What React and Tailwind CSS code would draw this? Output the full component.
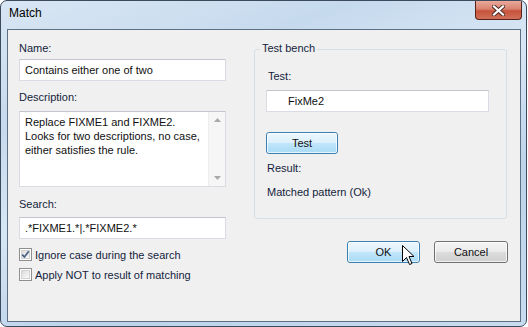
import React from 'react';

const Label = ({ children, className = '' }) => (
  <div className={`h-[14px] leading-[14px] text-[#141d3d] ${className}`}>{children}</div>
);

const TextBox = ({ children, className = '' }) => (
  <div
    className={`h-[22px] flex items-center bg-white border border-[#d9dde3] border-t-[#c2c6cc] text-[#101010] ${className}`}
  >
    {children}
  </div>
);

const Checkbox = ({ checked, label }) => (
  <div className="flex items-center gap-[3px] h-[13px]">
    <div className="w-[13px] h-[13px] border border-[#8f8f8f] bg-white p-[1px]">
      <div className="relative w-full h-full bg-gradient-to-br from-[#dcdcdc] to-[#fbfbfb] border border-[#d2d2d2]">
        {checked && (
          <svg viewBox="0 0 9 9" className="absolute -left-[1px] -top-[1px] w-[9px] h-[9px]">
            <path d="M1.2 4.6 L3.4 7 L7.8 1.3" fill="none" stroke="#4b6183" strokeWidth="1.7" />
          </svg>
        )}
      </div>
    </div>
    <span className="leading-[14px] text-[#141d3d]">{label}</span>
  </div>
);

const AeroButton = ({ children, hot, className = '' }) => (
  <div
    className={`h-[22px] rounded-[3px] border flex items-center justify-center text-[#101010] ${
      hot
        ? 'border-[#3c7fb1] bg-[linear-gradient(180deg,#edf7fd_0%,#dcf0fc_48%,#c1e6fb_50%,#aadbf6_100%)]'
        : 'border-[#707070] bg-[linear-gradient(180deg,#f4f4f4_0%,#ebebeb_48%,#dddddd_50%,#cfcfcf_100%)]'
    } ${className}`}
  >
    <div className="w-full h-full rounded-[2px] border border-white/70 flex items-center justify-center">
      {children}
    </div>
  </div>
);

export default function App() {
  return (
    <div className="w-[528px] h-[327px] bg-white font-['Liberation_Sans',Arial,sans-serif] text-[11px]">
      <div className="w-[527px] h-[327px] rounded-[7px] border border-[#3b4b5c] overflow-hidden flex flex-col pl-[6px] pr-[5px] pb-[4px] bg-[linear-gradient(160deg,#d9e6f3_0%,#c6daee_25%,#d7e6f4_45%,#bcd3ea_70%,#c9dcef_100%)]">
        {/* Title bar */}
        <div className="h-[28px] flex items-start justify-between shrink-0">
          <span className="mt-[5px] ml-[2px] text-[12px] leading-[15px] text-black">Match</span>
          <div className="relative w-[47px] h-[19px] -mr-[1px] rounded-b-[4px] border border-t-0 border-[#5a2318] bg-[linear-gradient(180deg,#e9a99b_0%,#d88270_45%,#c7533b_55%,#d0705a_100%)] flex items-center justify-center">
            <svg viewBox="0 0 12 11" className="w-[13px] h-[11px]">
              <path
                d="M1.5 1.5 L10.5 9.5 M10.5 1.5 L1.5 9.5"
                stroke="#4a2a24"
                strokeWidth="4"
                strokeLinecap="square"
              />
              <path
                d="M1.5 1.5 L10.5 9.5 M10.5 1.5 L1.5 9.5"
                stroke="#ffffff"
                strokeWidth="2.2"
                strokeLinecap="square"
              />
            </svg>
          </div>
        </div>

        {/* Client area */}
        <div className="flex-1 border border-[#5d6f83] bg-[#f0f0f0] flex pl-[11px] pt-[11px]">
          {/* Left column */}
          <div className="w-[207px] flex flex-col">
            <Label>Name:</Label>
            <TextBox className="mt-[4px] pl-[5px]">Contains either one of two</TextBox>

            <Label className="mt-[9px]">Description:</Label>
            <div className="mt-[7px] h-[76px] bg-white border border-[#d9dde3] border-t-[#c2c6cc] flex">
              <div className="flex-1 pl-[5px] pt-[3px] leading-[14px] text-[#101010]">
                Replace FIXME1 and FIXME2.
                <br />
                Looks for two descriptions, no case,
                <br />
                either satisfies the rule.
              </div>
              <div className="w-[17px] bg-[#f6f6f6] border-l border-[#eeeeee] flex flex-col justify-between items-center py-[6px]">
                <svg viewBox="0 0 7 4" className="w-[7px] h-[4px]">
                  <path d="M0 4 L3.5 0 L7 4 Z" fill="#a9a9a9" />
                </svg>
                <svg viewBox="0 0 7 4" className="w-[7px] h-[4px]">
                  <path d="M0 0 L3.5 4 L7 0 Z" fill="#a9a9a9" />
                </svg>
              </div>
            </div>

            <Label className="mt-[10px]">Search:</Label>
            <TextBox className="mt-[6px] pl-[5px]">.*FIXME1.*|.*FIXME2.*</TextBox>

            <div className="mt-[9px] flex flex-col gap-[7px]">
              <Checkbox checked label="Ignore case during the search" />
              <Checkbox label="Apply NOT to result of matching" />
            </div>
          </div>

          {/* Right column */}
          <div className="ml-[28px] mt-[8px] w-[254px] flex flex-col">
            <div className="relative w-[253px] h-[170px] border border-[#d5dfe5] rounded-[3px] pt-[19px] pl-[11px] flex flex-col">
              <span className="absolute -top-[9px] left-[5px] px-[2px] bg-[#f0f0f0] leading-[14px] text-[#141d3d]">
                Test bench
              </span>
              <Label className="pl-[2px]">Test:</Label>
              <TextBox className="mt-[7px] w-[223px] pl-[21px]">FixMe2</TextBox>
              <AeroButton hot className="mt-[20px] w-[72px] h-[21px]">
                Test
              </AeroButton>
              <Label className="mt-[7px] pl-[1px]">Result:</Label>
              <Label className="mt-[10px] pl-[1px]">Matched pattern (Ok)</Label>
            </div>

            <div className="mt-[22px] flex justify-end gap-[14px]">
              <div className="relative">
                <AeroButton hot className="w-[73px]">
                  OK
                </AeroButton>
                <svg
                  viewBox="0 0 13 21"
                  className="absolute left-[55px] top-[4px] w-[13px] h-[21px]"
                >
                  <path
                    d="M0.5 0.5 L0.5 16.5 L4.5 12.5 L7.5 19.5 L10 18.5 L7 11.5 L12 11.5 Z"
                    fill="#ffffff"
                    stroke="#000000"
                    strokeWidth="1"
                    strokeLinejoin="miter"
                  />
                </svg>
              </div>
              <AeroButton className="w-[74px]">Cancel</AeroButton>
            </div>
          </div>
        </div>
      </div>
    </div>
  );
}
